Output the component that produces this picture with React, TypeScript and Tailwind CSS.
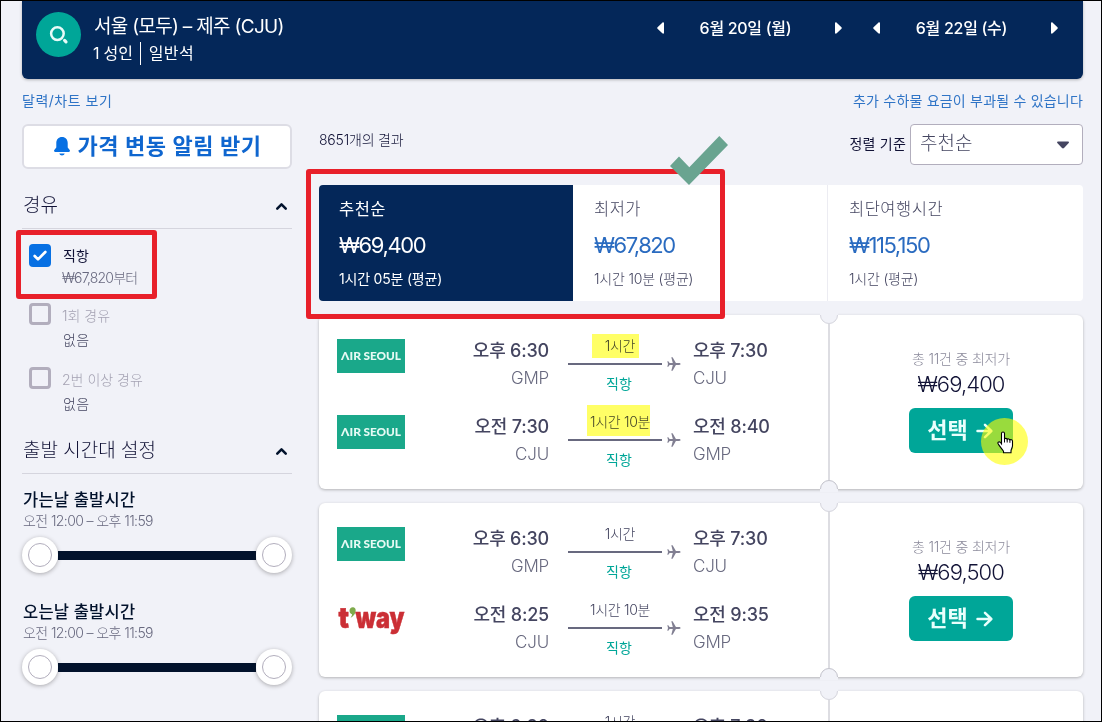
import React from 'react';
import { Check, ChevronUp } from 'lucide-react';

interface Leg {
  airline: 'airseoul' | 'tway';
  depart: string;
  from: string;
  duration: string;
  arrive: string;
  to: string;
}

interface Ticket {
  price: string;
  legs: Leg[];
}

const outbound: Leg = { airline: 'airseoul', depart: '오후 6:30', from: 'GMP', duration: '1시간', arrive: '오후 7:30', to: 'CJU' };

const tickets: Ticket[] = [
  {
    price: '₩69,400',
    legs: [outbound, { airline: 'airseoul', depart: '오전 7:30', from: 'CJU', duration: '1시간 10분', arrive: '오전 8:40', to: 'GMP' }],
  },
  {
    price: '₩69,500',
    legs: [outbound, { airline: 'tway', depart: '오전 8:25', from: 'CJU', duration: '1시간 10분', arrive: '오전 9:35', to: 'GMP' }],
  },
  // only the top edge of this one is in view
  { price: '', legs: [outbound] },
];

const Triangle = ({ dir }: { dir: 'left' | 'right' }) => (
  <svg width="7" height="12" viewBox="0 0 7 12" className={dir === 'left' ? 'rotate-180' : ''}>
    <path d="M0 1.2C0 .2 1 0 1.700 .7l4.500 4.300a1.300 1.300 0 0 1 0 2L1.700 11.300C1 12 0 11.800 0 10.800z" fill="#fff" />
  </svg>
);

const DateStepper = ({ label }: { label: string }) => (
  <div className="flex w-[185px] items-center text-[16px] leading-6 font-medium tracking-[-0.3px]">
    <Triangle dir="left" />
    <span className="flex-1 pr-[8px] text-center">{label}</span>
    <Triangle dir="right" />
  </div>
);

const Header = () => (
  <header className="flex h-[78px] rounded-b-md bg-[#042759] pl-[14px] text-white shadow-[0_1px_3px_rgba(37,32,31,.3)]">
    <div className="mt-[11px] flex size-[45px] items-center justify-center rounded-full bg-[#00a698]">
      <svg width="20" height="20" viewBox="0 0 20 20" fill="none" stroke="#e8fbf8">
        <circle cx="8.400" cy="8.600" r="6.300" strokeWidth="2.500" />
        <path d="M15.600 15.400l1.400 1.400" strokeWidth="3.200" strokeLinecap="round" />
      </svg>
    </div>
    <div className="mt-[12px] ml-[13px]">
      <div className="text-[19px] leading-[28px] tracking-[-0.7px]">서울 (모두) – 제주 (CJU)</div>
      <div className="flex h-[24px] items-center text-[16px]">
        <span className="-ml-px tracking-[-0.2px]">1 성인</span>
        <span className="mr-[8px] ml-[7px] h-[23px] w-px bg-white" />
        <span className="tracking-[0.4px]">일반석</span>
      </div>
    </div>
    <div className="mt-[15px] mr-[25px] ml-auto flex items-start gap-[31px]">
      <DateStepper label="6월 20일 (월)" />
      <DateStepper label="6월 22일 (수)" />
    </div>
  </header>
);

const SectionTitle = ({ children }: { children: React.ReactNode }) => (
  <div className="flex h-[49px] items-center justify-between border-b border-[#d5d5de] pt-[4px] pr-[2px] text-[19px] font-light text-[#111236]">
    <span className="pl-px">{children}</span>
    <ChevronUp size={17} strokeWidth={3.6} className="text-[#02122c]" />
  </div>
);

interface StopProps {
  label: string;
  note: string;
  checked?: boolean;
}

const StopOption = ({ label, note, checked }: StopProps) => (
  <div className="flex pl-[7px]">
    {checked ? (
      <span className="-mt-px flex h-[23px] w-[22px] items-center justify-center rounded bg-[#0770e3] text-white">
        <Check size={16} strokeWidth={4} />
      </span>
    ) : (
      <span className="size-[22px] rounded border-[3px] border-[#b2aebd]" />
    )}
    <div className="ml-[11px] text-[14px] font-light">
      <div className={checked ? 'pl-px leading-[22px] font-normal text-[#111236]' : 'leading-[25px] text-[#a5a3b3]'}>{label}</div>
      <div className={checked ? 'leading-[22px] tracking-[-0.8px] text-[#68697f]' : '-mt-px mb-px pl-px leading-[25px] tracking-[0.3px] text-[#444560]'}>{note}</div>
    </div>
  </div>
);

const Knob = () => (
  <span className="flex size-[36px] items-center justify-center rounded-full bg-white shadow-[0_1px_4px_rgba(37,32,31,.35)]">
    <span className="size-[24px] rounded-full border border-[#b2aebd]" />
  </span>
);

const TimeRange = ({ title }: { title: string }) => (
  <div className="h-[112px]">
    <div className="pl-px text-[16.5px] leading-[24px] font-medium tracking-[0.2px] text-[#02122c]">{title}</div>
    <div className="-mt-px pl-px text-[14px] leading-[19px] font-light tracking-[-0.6px] text-[#68697f]">오전 12:00 – 오후 11:59</div>
    <div className="mt-[7px] flex items-center">
      <Knob />
      <span className="h-[9px] flex-1 bg-[#02122c]" />
      <Knob />
    </div>
  </div>
);

const Sidebar = () => (
  <aside className="w-[270px]">
    <button className="flex h-[45px] w-full items-center justify-center gap-[7px] rounded-md border-2 border-[#dddde5] bg-white pl-[2px] text-[22px] font-bold tracking-[0.6px] text-[#0f66cf]">
      <svg width="16" height="19" viewBox="0 0 16 19" fill="#0770e3">
        <path d="M8 0C4.500 0 2.300 2.600 2.300 6v4.500L.3 13c-.6.900-.2 2 .9 2h13.600c1.100 0 1.500-1.100.9-2l-2-2.500V6C13.700 2.600 11.500 0 8 0zM5.300 16.500c.3 1.300 1.400 2 2.700 2s2.400-.7 2.700-2z" />
      </svg>
      <span>가격 변동 알림 받기</span>
    </button>

    <div className="mt-[11px]">
      <SectionTitle>경유</SectionTitle>
      <div className="pt-[16px]">
        <StopOption checked label="직항" note="₩67,820부터" />
        <div className="mt-[14px]">
          <StopOption label="1회 경유" note="없음" />
        </div>
        <div className="mt-[14px]">
          <StopOption label="2번 이상 경유" note="없음" />
        </div>
      </div>
    </div>

    <div className="mt-[8px]">
      <SectionTitle>출발 시간대 설정</SectionTitle>
      <div className="pt-[14px]">
        <TimeRange title="가는날 출발시간" />
        <TimeRange title="오는날 출발시간" />
      </div>
    </div>
  </aside>
);

interface TabProps {
  title: string;
  price: string;
  time: string;
  active?: boolean;
}

const SortTab = ({ title, price, time, active }: TabProps) => (
  <div className={active ? 'w-[254px] bg-[#042759] pl-[20px] font-normal text-white' : 'w-[255px] border-r border-[#ececf2] pl-[21px] font-light text-[#444560] last:border-0'}>
    <div className="mt-[12px] text-[16.500px] leading-[24px] tracking-[0.5px]">{title}</div>
    <div className={active ? 'mt-[9px] text-[22px] leading-[30px] tracking-[-1.4px]' : 'mt-[9px] text-[22px] leading-[30px] font-normal tracking-[-1.5px] text-[#2a6bc0]'}>{price}</div>
    <div className="mt-[8px] text-[14px] leading-[22px] tracking-[-0.2px]">{time}</div>
  </div>
);

const AirlineLogo = ({ airline }: { airline: Leg['airline'] }) => {
  if (airline === 'tway') {
    return (
      <svg width="68" height="34" viewBox="0 0 68 34" className="overflow-visible font-[Inter] font-black" fill="#cb2f35" stroke="#cb2f35" strokeWidth=".5">
        <text x="1.500" y="25" fontSize="29" textLength="10.500" lengthAdjust="spacingAndGlyphs">t</text>
        <path d="M12.500 7.800c0-2.300 1.700-3.800 3.700-3.500 2.600.4 3 3.200 2 5.800-.9 2.200-2.600 3.800-4.700 4.700 1-1.400 1.600-2.400 1.500-3.600-1.500-.4-2.500-1.700-2.500-3.400z" fill="#7fab4c" stroke="none" />
        <text x="18.500" y="25" fontSize="29" textLength="49" lengthAdjust="spacingAndGlyphs">way</text>
      </svg>
    );
  }
  return (
    <svg width="68" height="34" viewBox="0 0 68 34" className="bg-[#1aa88a] font-[Lato] font-black" fill="#e6faf4">
      <text x="4" y="21" fontSize="12" textLength="20" lengthAdjust="spacingAndGlyphs">ΛIR</text>
      <text x="26.500" y="21" fontSize="12" textLength="37.500" lengthAdjust="spacingAndGlyphs">SEOUL</text>
    </svg>
  );
};

const Plane = () => (
  <svg width="14" height="14" viewBox="0 0 14 14" fill="#817f92">
    <path d="M13.500 7c0-.6-.6-.9-1.300-.9H8.900L5.600.3H4.300l1.500 5.800H2.600L1.300 4.300H.3L1 7l-.7 2.700h1l1.300-1.800h3.200L4.300 13.700h1.300l3.300-5.800h3.300c.7 0 1.300-.3 1.300-.9z" />
  </svg>
);

const LegRow = ({ leg }: { leg: Leg }) => (
  <div className="flex h-[62px]">
    <AirlineLogo airline={leg.airline} />
    <div className="ml-[34px] w-[110px] text-right text-[#444560]">
      <div className="text-[18px] leading-[24px] font-medium tracking-[-0.2px]">{leg.depart}</div>
      <div className="mt-[3px] text-[17px] leading-[24px] font-light tracking-[-0.2px] text-[#68697f]">{leg.from}</div>
    </div>
    <div className="ml-[19px] w-[94px] text-center text-[14px] font-light">
      <div className="h-[24px] pl-[10px] leading-[14px] tracking-[-0.3px] whitespace-nowrap text-[#444560]">{leg.duration}</div>
      <div className="h-[2px] bg-[#68697f]" />
      <div className="mt-[9px] pl-[8px] leading-[20px] font-normal text-[#00a698]">직항</div>
    </div>
    <div className="mt-[18px] ml-[5px]">
      <Plane />
    </div>
    <div className="ml-[12px] text-[#444560]">
      <div className="text-[18px] leading-[24px] font-medium tracking-[-0.2px]">{leg.arrive}</div>
      <div className="mt-[3px] text-[17px] leading-[24px] font-light tracking-[-0.2px] text-[#68697f]">{leg.to}</div>
    </div>
  </div>
);

// half circle punched out of the card; the 3px above it hide the card's shadow
const Notch = ({ className, stroke }: { className: string; stroke: string }) => (
  <svg width="18" height="12" viewBox="0 0 18 12" className={className}>
    <path d="M0 0h18v3a9 9 0 0 1-18 0z" fill="#f1f2f8" />
    <path d="M.5 3a8.500 8.500 0 0 0 17 0" fill="none" stroke={stroke} />
  </svg>
);

const TicketCard = ({ ticket }: { ticket: Ticket }) => (
  <div className="relative flex h-[174px] shrink-0 rounded-md bg-white shadow-[0_1px_3px_rgba(37,32,31,.3)]">
    <div className="flex w-[509px] flex-col gap-[14px] pt-[24px] pl-[18px]">
      {ticket.legs.map((leg, i) => (
        <LegRow key={i} leg={leg} />
      ))}
    </div>
    <div className="w-[2px] bg-[#dddde2]" />
    {ticket.price && (
      <div className="flex flex-1 flex-col items-center pt-[34px] pl-[9px]">
        <div className="text-[14px] leading-[20px] font-light tracking-[-0.2px] text-[#8b8a9b]">총 11건 중 최저가</div>
        <div className="text-[22px] leading-[30px] font-light tracking-[-0.9px] text-[#111236]">{ticket.price}</div>
        <button className="mt-[9px] flex h-[45px] w-[104px] items-center justify-center gap-[8px] rounded-md bg-[#00a698] pr-[2px] text-[22px] font-bold text-[#e8fffc]">
          <span>선택</span>
          <svg width="17" height="16" viewBox="0 0 17 16" fill="none" stroke="currentColor" strokeWidth="2.500" strokeLinecap="round" strokeLinejoin="round">
            <path d="M1.500 8h13.500M9 1.800L15.300 8 9 14.200" />
          </svg>
        </button>
      </div>
    )}
    <Notch className="absolute -top-[3px] left-[501px]" stroke="#d6d6dd" />
    <Notch className="absolute -bottom-[3px] left-[501px] rotate-180" stroke="#c4c4cc" />
  </div>
);

const Results = () => (
  <main className="ml-[27px] w-[764px]">
    <div className="flex h-[61px] items-start">
      <span className="mt-[5px] text-[14px] leading-[22px] font-light tracking-[-0.2px] text-[#111236]">8651개의 결과</span>
      <span className="mt-[9px] ml-auto text-[14px] leading-[22px] tracking-[0.2px] text-[#111236]">정렬 기준</span>
      <div className="ml-[4px] flex h-[41px] w-[173px] items-center rounded border border-[#b2aebd] bg-white pr-[13px] pl-[9px] text-[19px] font-light text-[#444560]">
        <span>추천순</span>
        <svg width="12" height="8" viewBox="0 0 12 8" className="ml-auto" fill="#444560">
          <path d="M1 .5h10c.8 0 1.200.9.700 1.500L7 7c-.6.600-1.400.600-2 0L.3 2C-.2 1.400.2.500 1 .500z" />
        </svg>
      </div>
    </div>

    <div className="flex h-[116px] overflow-hidden rounded bg-white">
      <SortTab active title="추천순" price="₩69,400" time="1시간 05분 (평균)" />
      <SortTab title="최저가" price="₩67,820" time="1시간 10분 (평균)" />
      <SortTab title="최단여행시간" price="₩115,150" time="1시간 (평균)" />
    </div>

    <div className="mt-[14px] flex flex-col gap-[14px]">
      {tickets.map((ticket, i) => (
        <TicketCard key={i} ticket={ticket} />
      ))}
    </div>
  </main>
);

const Annotations = () => (
  <div className="pointer-events-none absolute inset-0">
    <div className="absolute top-[229px] left-[15px] h-[69px] w-[141px] rounded-[3px] border-[5px] border-[#e8202a]" />
    <div className="absolute top-[168px] left-[305px] h-[150px] w-[419px] rounded-[3px] border-[5px] border-[#e8202a]" />
    <div className="absolute top-[333px] left-[591px] h-[24px] w-[47px] bg-[#ffff66] mix-blend-multiply" />
    <div className="absolute top-[404px] left-[586px] h-[31px] w-[63px] bg-[#ffff66] mix-blend-multiply" />
    <svg className="absolute top-[135px] left-[669px]" width="58" height="49" viewBox="0 0 58 49">
      <path d="M0 30L9 20.500 19.300 31.300 49.300 0 58 9 19 49z" fill="#69a490" />
    </svg>
    <div className="absolute top-[417px] left-[980px] size-[47px] rounded-full bg-[#ffff00] opacity-60" />
    <svg className="absolute top-[430px] left-[996px]" width="18" height="23" viewBox="0 0 18 23">
      <path
        d="M4.500 2.500c0-2 3-2 3 0v5.500c.5-1 2.500-.8 2.700.4.600-.8 2.400-.6 2.700.6.800-.7 2.600-.4 2.600 1.200v4.500c0 2-1.500 3.300-1.500 5v2H6.500v-1.500C5 18 2 14.500 1 12.500c-.6-1.500 1.500-2.300 2.500-1l1 1.300z"
        fill="#fff"
        stroke="#000"
        strokeWidth="1.100"
      />
      <path d="M7.500 8v3.500M10.200 8.500v3M12.900 9.300v2.500" stroke="#000" strokeWidth="1" />
    </svg>
  </div>
);

const App: React.FC = () => (
  <div className="relative h-[722px] w-[1102px] overflow-hidden border border-black bg-[#f1f2f8] font-[Inter,'Noto_Sans_CJK_KR',sans-serif]">
    <div className="ml-[21px] w-[1061px]">
      <Header />
      <div className="mt-[12px] flex h-[20px] justify-between text-[14px] leading-[20px] tracking-[0.2px] text-[#2f74c6]">
        <span className="tracking-[0.5px]">달력/차트 보기</span>
        <span>추가 수하물 요금이 부과될 수 있습니다</span>
      </div>
      <div className="mt-[13px] flex">
        <Sidebar />
        <Results />
      </div>
    </div>
    <Annotations />
  </div>
);

export default App;
